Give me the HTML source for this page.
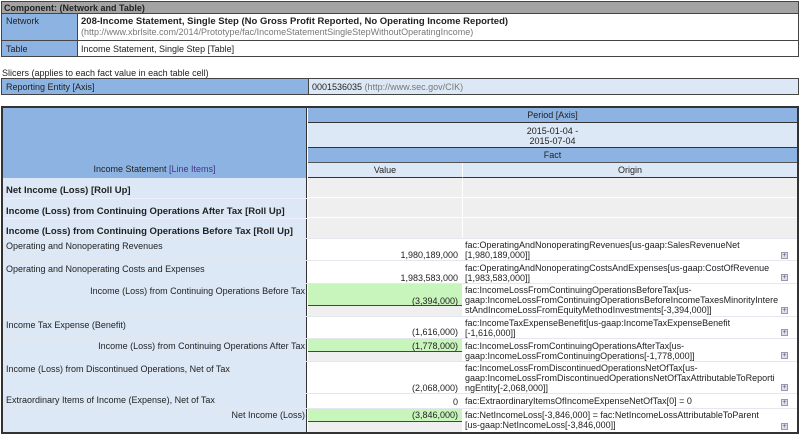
<!DOCTYPE html>
<html><head><meta charset="utf-8"><style>
*{margin:0;padding:0;box-sizing:border-box}
body{width:800px;height:435px;background:#fff;font-family:"Liberation Sans",sans-serif;font-size:9px;color:#222;position:relative;overflow:hidden}
.a{position:absolute}
.b{border:1px solid #444}
.blue{background:#8db3e2}
.lt{background:#dde8f6}
.gr{background:#efefef}
.g{background:#c8f5bc}
.c{text-align:center}
.r{text-align:right}
.bold{font-weight:bold}
.ic{position:absolute;width:7px;height:7px;border:1px solid #99a;background:#dde;font-size:7px;line-height:5px;text-align:center;color:#557}
</style></head><body>
<!-- component -->
<div class="a b bold" style="left:1px;top:1px;width:798px;height:13px;background:#a3a3a3;padding:1px 2px;font-size:9px">Component: (Network and Table)</div>
<div class="a b blue" style="left:1px;top:13px;width:77px;height:28px;padding:2px 4px">Network</div>
<div class="a b" style="left:77px;top:13px;width:722px;height:28px;padding:2px 3px;line-height:10px"><b style="font-size:9.5px">208-Income Statement, Single Step (No Gross Profit Reported, No Operating Income Reported)</b><br><span style="color:#777">(http://www.xbrlsite.com/2014/Prototype/fac/IncomeStatementSingleStepWithoutOperatingIncome)</span></div>
<div class="a b blue" style="left:1px;top:40px;width:77px;height:17px;padding:3px 4px">Table</div>
<div class="a b" style="left:77px;top:40px;width:722px;height:17px;padding:3px 3px">Income Statement, Single Step [Table]</div>
<div class="a" style="left:2px;top:68px">Slicers (applies to each fact value in each table cell)</div>
<div class="a b blue" style="left:1px;top:78px;width:308px;height:17px;padding:3px 4px">Reporting Entity [Axis]</div>
<div class="a b lt" style="left:308px;top:78px;width:491px;height:17px;padding:3px 3px">0001536035 <span style="color:#777">(http://www.sec.gov/CIK)</span></div>
<!-- main table -->
<div class="a" style="left:1px;top:106px;width:798px;height:328px;border:2px solid #333"></div>
<div class="a blue c" style="left:3px;top:108px;width:304px;height:70px;padding-top:56px;border-right:1px solid #333">Income Statement <span style="color:#438">[Line Items]</span></div>
<div class="a blue c" style="left:308px;top:108px;width:489px;height:15px;padding-top:2px;border-bottom:1px solid #333">Period [Axis]</div>
<div class="a lt c" style="left:308px;top:123px;width:489px;height:25px;padding-top:3px;line-height:10px;border-bottom:1px solid #333">2015-01-04 -<br>2015-07-04</div>
<div class="a blue c" style="left:308px;top:148px;width:489px;height:15px;padding-top:2px;border-bottom:1px solid #555">Fact</div>
<div class="a lt c" style="left:308px;top:163px;width:154px;height:15px;padding-top:2px;border-bottom:1px solid #333">Value</div>
<div class="a lt c" style="left:462px;top:163px;width:335px;height:15px;padding-top:2px;border-bottom:1px solid #333;border-left:1px solid #fff">Origin</div>
<!-- body -->
<div class="a lt" style="left:3px;top:178px;width:304px;height:254px;border-right:1px solid #333"></div>
<div class="a" style="left:308px;top:178px;width:489px;height:254px;background:#fff"></div>

<div class="a bold" style="left:6px;top:185px;font-size:9.5px">Net Income (Loss) [Roll Up]</div>
<div class="a gr" style="left:308px;top:178px;width:489px;height:20px;border-bottom:1px solid #fff"></div>
<div class="a bold" style="left:6px;top:206px;font-size:9.5px">Income (Loss) from Continuing Operations After Tax [Roll Up]</div>
<div class="a gr" style="left:308px;top:198px;width:489px;height:20px;border-bottom:1px solid #fff"></div>
<div class="a bold" style="left:6px;top:226px;font-size:9.5px">Income (Loss) from Continuing Operations Before Tax [Roll Up]</div>
<div class="a gr" style="left:308px;top:218px;width:489px;height:20px"></div>
<div class="a" style="left:462px;top:178px;width:1px;height:254px;background:#fff"></div>

<!-- row lines left -->
<div class="a" style="left:3px;top:198px;width:304px;height:1px;background:#eef"></div>
<div class="a" style="left:3px;top:218px;width:304px;height:1px;background:#eef"></div>
<div class="a" style="left:3px;top:238px;width:794px;height:1px;background:#e4e8ee"></div>
<div class="a" style="left:3px;top:260px;width:794px;height:1px;background:#e4e8ee"></div>
<div class="a" style="left:3px;top:283px;width:794px;height:1px;background:#e4e8ee"></div>
<div class="a" style="left:3px;top:316px;width:794px;height:1px;background:#e4e8ee"></div>
<div class="a" style="left:3px;top:338px;width:794px;height:1px;background:#e4e8ee"></div>
<div class="a" style="left:3px;top:361px;width:794px;height:1px;background:#e4e8ee"></div>
<div class="a" style="left:3px;top:393px;width:794px;height:1px;background:#e4e8ee"></div>
<div class="a" style="left:3px;top:408px;width:794px;height:1px;background:#e4e8ee"></div>

<!-- left labels -->
<div class="a" style="left:6px;top:241px">Operating and Nonoperating Revenues</div>
<div class="a" style="left:6px;top:264px">Operating and Nonoperating Costs and Expenses</div>
<div class="a r" style="left:3px;top:286px;width:302px">Income (Loss) from Continuing Operations Before Tax</div>
<div class="a" style="left:6px;top:320px">Income Tax Expense (Benefit)</div>
<div class="a r" style="left:3px;top:341px;width:302px">Income (Loss) from Continuing Operations After Tax</div>
<div class="a" style="left:6px;top:364px">Income (Loss) from Discontinued Operations, Net of Tax</div>
<div class="a" style="left:6px;top:395px">Extraordinary Items of Income (Expense), Net of Tax</div>
<div class="a r" style="left:3px;top:410px;width:302px">Net Income (Loss)</div>

<!-- value cells -->
<div class="a r" style="left:308px;top:250px;width:150px">1,980,189,000</div>
<div class="a r" style="left:308px;top:273px;width:150px">1,983,583,000</div>
<div class="a g" style="left:308px;top:284px;width:154px;height:22px;border-bottom:1px solid #444"></div>
<div class="a gr" style="left:308px;top:306px;width:154px;height:10px"></div>
<div class="a r" style="left:308px;top:296px;width:150px">(3,394,000)</div>
<div class="a r" style="left:308px;top:327px;width:150px">(1,616,000)</div>
<div class="a g" style="left:308px;top:339px;width:154px;height:13px;border-bottom:1px solid #444"></div>
<div class="a gr" style="left:308px;top:352px;width:154px;height:9px"></div>
<div class="a r" style="left:308px;top:341px;width:150px">(1,778,000)</div>
<div class="a r" style="left:308px;top:383px;width:150px">(2,068,000)</div>
<div class="a r" style="left:308px;top:397px;width:150px">0</div>
<div class="a g" style="left:308px;top:409px;width:154px;height:13px;border-bottom:1px solid #444"></div>
<div class="a gr" style="left:308px;top:422px;width:154px;height:10px"></div>
<div class="a r" style="left:308px;top:410px;width:150px">(3,846,000)</div>

<!-- origin -->
<div class="a" style="left:465px;top:240px;line-height:10px">fac:OperatingAndNonoperatingRevenues[us-gaap:SalesRevenueNet<br>[1,980,189,000]]</div>
<div class="a" style="left:465px;top:263px;line-height:10px">fac:OperatingAndNonoperatingCostsAndExpenses[us-gaap:CostOfRevenue<br>[1,983,583,000]]</div>
<div class="a" style="left:465px;top:285px;line-height:10px">fac:IncomeLossFromContinuingOperationsBeforeTax[us-<br>gaap:IncomeLossFromContinuingOperationsBeforeIncomeTaxesMinorityIntere<br>stAndIncomeLossFromEquityMethodInvestments[-3,394,000]]</div>
<div class="a" style="left:465px;top:318px;line-height:10px">fac:IncomeTaxExpenseBenefit[us-gaap:IncomeTaxExpenseBenefit<br>[-1,616,000]]</div>
<div class="a" style="left:465px;top:341px;line-height:10px">fac:IncomeLossFromContinuingOperationsAfterTax[us-<br>gaap:IncomeLossFromContinuingOperations[-1,778,000]]</div>
<div class="a" style="left:465px;top:363px;line-height:10px">fac:IncomeLossFromDiscontinuedOperationsNetOfTax[us-<br>gaap:IncomeLossFromDiscontinuedOperationsNetOfTaxAttributableToReporti<br>ngEntity[-2,068,000]]</div>
<div class="a" style="left:465px;top:396px;line-height:10px">fac:ExtraordinaryItemsOfIncomeExpenseNetOfTax[0] = 0</div>
<div class="a" style="left:465px;top:410px;line-height:10px">fac:NetIncomeLoss[-3,846,000] = fac:NetIncomeLossAttributableToParent<br>[us-gaap:NetIncomeLoss[-3,846,000]]</div>

<div class="ic" style="left:781px;top:252px">+</div>
<div class="ic" style="left:781px;top:274px">+</div>
<div class="ic" style="left:781px;top:307px">+</div>
<div class="ic" style="left:781px;top:329px">+</div>
<div class="ic" style="left:781px;top:352px">+</div>
<div class="ic" style="left:781px;top:384px">+</div>
<div class="ic" style="left:781px;top:399px">+</div>
<div class="ic" style="left:781px;top:423px">+</div>
</body></html>
